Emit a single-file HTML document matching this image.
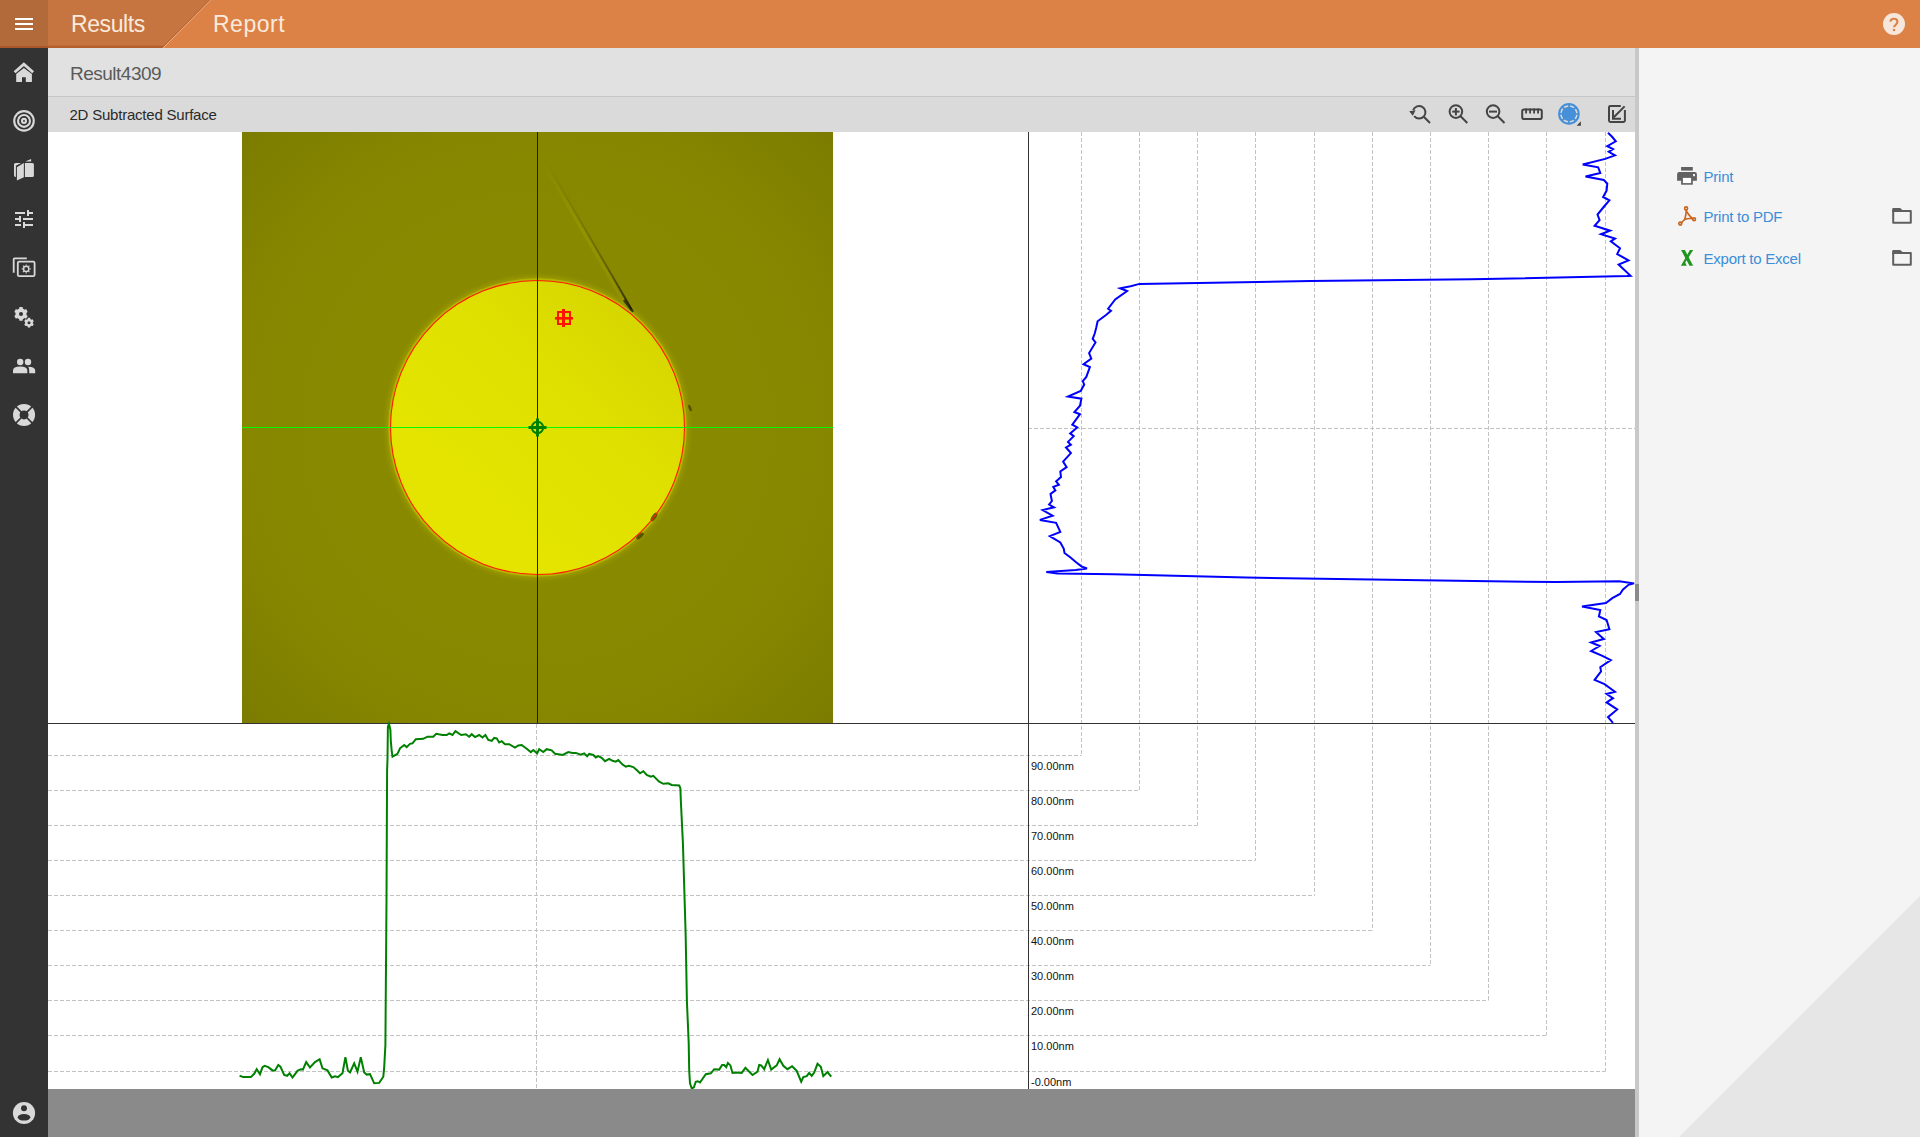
<!DOCTYPE html>
<html><head><meta charset="utf-8">
<style>
*{margin:0;padding:0;box-sizing:border-box}
html,body{width:1920px;height:1137px;overflow:hidden;background:#fff;font-family:"Liberation Sans",sans-serif}
.a{position:absolute}
.t{position:absolute;white-space:nowrap}
#topbar{left:0;top:0;width:1920px;height:48px;background:#dc8247}
#ham{left:0;top:0;width:48px;height:48px;background:#b36a3a;border-bottom:2px solid #a9582c}
#side{left:0;top:48px;width:48px;height:1089px;background:#333333}
#hdr{left:48px;top:48px;width:1587px;height:49px;background:#e1e1e1;border-bottom:1px solid #c6c6c6}
#tb{left:48px;top:97px;width:1587px;height:35px;background:#dadada}
#content{left:48px;top:132px;width:1587px;height:957px;background:#fff}
#bottom{left:48px;top:1089px;width:1587px;height:48px;background:#8a8a8a}
#split{left:1635px;top:48px;width:4px;height:1089px;background:#c8c8c8}
#rp{left:1639px;top:48px;width:281px;height:1089px;background:#f4f4f4;overflow:hidden}
.lbl{font-size:11px;line-height:11px;color:#111}
.lnk{font-size:15px;line-height:15px;color:#3b8ed8;letter-spacing:-0.25px}
</style></head>
<body>
<div id="topbar" class="a"></div>
<svg class="a" style="left:0;top:0" width="300" height="48">
  <polygon points="48,0 210,0 163,48 48,48" fill="#c67540"/>
  <line x1="163" y1="48" x2="210.5" y2="0" stroke="#f2b98d" stroke-width="1"/>
  <line x1="162" y1="48" x2="209.5" y2="0" stroke="#b5612f" stroke-width="1"/>
  <rect x="48" y="46" width="115" height="2" fill="#b3602c"/><rect x="48" y="45" width="116" height="1" fill="#c06c38"/>
</svg>
<div id="ham" class="a"></div>
<svg class="a" style="left:0;top:0" width="48" height="48">
  <rect x="15" y="18" width="18" height="2" fill="#fff"/>
  <rect x="15" y="23" width="18" height="2" fill="#fff"/>
  <rect x="15" y="28" width="18" height="2" fill="#fff"/>
</svg>
<div class="t" style="left:71px;top:12.5px;font-size:23px;line-height:23px;color:#faeadd;letter-spacing:-0.4px">Results</div>
<div class="t" style="left:213px;top:12.5px;font-size:23px;line-height:23px;color:#faeadd;letter-spacing:0.5px">Report</div>
<svg class="a" style="left:1870px;top:0" width="50" height="48">
  <circle cx="24" cy="24" r="11" fill="#f7e6db"/>
  <path d="M20.3 21.6 Q20.7 18.7 24 18.7 Q27.4 18.7 27.4 21.8 Q27.4 23.3 25.7 24.8 Q24 26.1 24 27.3" fill="none" stroke="#dc8247" stroke-width="2.1"/>
  <rect x="22.9" y="28.9" width="2.2" height="2.2" fill="#dc8247"/>
</svg>

<div id="side" class="a"></div>

<svg class="a" style="left:0;top:48px" width="48" height="400" fill="#d9d9d9">
  <!-- home: 14..34 x 62..82 (offset -48) -->
  <g transform="translate(0,-48)">
    <polyline points="14.6,72.3 23.85,64.2 33.1,72.3" fill="none" stroke="#d9d9d9" stroke-width="2.8"/><path d="M16.2 74 L23.85 68 L31.9 74 V81.9 H25.8 V77.2 H22 V81.9 H16.2 Z"/>
    <!-- target -->
    <circle cx="24" cy="120.9" r="9.75" fill="none" stroke="#d9d9d9" stroke-width="2.1"/>
    <circle cx="24" cy="120.9" r="5.95" fill="none" stroke="#d9d9d9" stroke-width="2.1"/>
    <circle cx="24" cy="120.9" r="2" fill="none" stroke="#d9d9d9" stroke-width="2.1"/>
    <!-- map/book -->
    <path d="M14 164.5 Q14 162.9 15.6 162.9 H21 L15.9 165.8 V176.9 H15.6 Q14 176.9 14 175.3 Z"/>
    <path d="M16.9 167.2 L23.85 162.9 V177.2 L16.9 180.6 Z"/>
    <path d="M24.9 162.9 H32.3 Q33.9 162.9 33.9 164.5 V175.4 Q33.9 177 32.3 177 H24.9 Z"/>
    <path d="M25.3 161.6 L31.1 159 V161.6 Z"/>
    <!-- sliders -->
    <rect x="15" y="212" width="10" height="2"/><rect x="27" y="210" width="2" height="6"/><rect x="29" y="212" width="4" height="2"/>
    <rect x="15" y="218" width="4" height="2"/><rect x="19" y="216" width="2" height="6"/><rect x="23" y="218" width="10" height="2"/>
    <rect x="15" y="224" width="6" height="2"/><rect x="23" y="222" width="2" height="6"/><rect x="25" y="224" width="8" height="2"/>
    <!-- gallery -->
    <path d="M13.7 272.7 V259.2 Q13.7 258.3 14.6 258.3 H26.8" fill="none" stroke="#d9d9d9" stroke-width="1.8"/>
    <rect x="17.8" y="261.6" width="16.8" height="14.6" rx="1.5" fill="none" stroke="#d9d9d9" stroke-width="1.8"/>
    <circle cx="26.2" cy="268.9" r="2.6" fill="none" stroke="#d9d9d9" stroke-width="1.4"/>
    <g stroke="#d9d9d9" stroke-width="1.2">
      <line x1="26.2" y1="264.4" x2="26.2" y2="265.6"/><line x1="26.2" y1="272.2" x2="26.2" y2="273.4"/>
      <line x1="21.7" y1="268.9" x2="22.9" y2="268.9"/><line x1="29.5" y1="268.9" x2="30.7" y2="268.9"/>
      <line x1="23" y1="265.7" x2="23.9" y2="266.6"/><line x1="28.5" y1="271.2" x2="29.4" y2="272.1"/>
      <line x1="29.4" y1="265.7" x2="28.5" y2="266.6"/><line x1="23.9" y1="271.2" x2="23" y2="272.1"/>
    </g>
    <!-- gears -->
    <path d="M22.79 319.21 L22.60 320.72 L19.40 320.72 L19.21 319.21 L17.30 318.10 L15.90 318.69 L14.30 315.92 L15.51 315.01 L15.51 312.79 L14.30 311.88 L15.90 309.11 L17.30 309.70 L19.21 308.59 L19.40 307.08 L22.60 307.08 L22.79 308.59 L24.70 309.70 L26.10 309.11 L27.70 311.88 L26.49 312.79 L26.49 315.01 L27.70 315.92 L26.10 318.69 L24.70 318.10 Z"/><circle cx="21" cy="313.9" r="2.0" fill="#333"/>
    <path d="M30.28 326.49 L30.14 327.57 L27.86 327.57 L27.72 326.49 L26.35 325.70 L25.36 326.12 L24.21 324.15 L25.08 323.49 L25.08 321.91 L24.21 321.25 L25.36 319.28 L26.35 319.70 L27.72 318.91 L27.86 317.83 L30.14 317.83 L30.28 318.91 L31.65 319.70 L32.64 319.28 L33.79 321.25 L32.92 321.91 L32.92 323.49 L33.79 324.15 L32.64 326.12 L31.65 325.70 Z"/><circle cx="29" cy="322.7" r="1.5" fill="#333"/>
    <!-- people -->
    <circle cx="20.2" cy="362" r="3.2"/>
    <circle cx="28" cy="362" r="3.2"/>
    <path d="M13 373.2 V370.5 Q13 366.6 20.2 366.6 Q27.3 366.6 27.3 370.5 V373.2 Z"/>
    <path d="M28.3 366.8 Q35.2 367 35.2 370.5 V373.2 H29.2 V370.5 Q29.2 368.2 28.3 366.8 Z"/>
    <!-- lifebuoy -->
    <circle cx="24.04" cy="414.9" r="11"/>
    <circle cx="24.04" cy="414.9" r="4.5" fill="#333"/>
    <g stroke="#333" stroke-width="1.7"><line x1="26.16" y1="417.02" x2="32.53" y2="423.39"/><line x1="21.92" y1="417.02" x2="15.55" y2="423.39"/><line x1="21.92" y1="412.78" x2="15.55" y2="406.41"/><line x1="26.16" y1="412.78" x2="32.53" y2="406.41"/></g>
  </g>
</svg>
<svg class="a" style="left:0;top:1090px" width="48" height="47">
  <circle cx="24" cy="23" r="11.1" fill="#d9d9d9"/>
  <circle cx="24" cy="18.3" r="3" fill="#333"/>
  <ellipse cx="24" cy="27.3" rx="6.3" ry="3.3" fill="#333"/>
</svg>
<div id="hdr" class="a"></div>
<div id="tb" class="a"></div>
<div id="content" class="a"></div>

<svg class="a" style="left:0;top:0" width="1640" height="1137">
 <g stroke="#c3c3c3" stroke-width="1" stroke-dasharray="4 2" fill="none">
<line x1="1081.5" y1="132" x2="1081.5" y2="755.5"/>
<line x1="48" y1="755.5" x2="1081.5" y2="755.5"/>
<line x1="1139.5" y1="132" x2="1139.5" y2="790.5"/>
<line x1="48" y1="790.5" x2="1139.5" y2="790.5"/>
<line x1="1197.5" y1="132" x2="1197.5" y2="825.5"/>
<line x1="48" y1="825.5" x2="1197.5" y2="825.5"/>
<line x1="1255.5" y1="132" x2="1255.5" y2="860.5"/>
<line x1="48" y1="860.5" x2="1255.5" y2="860.5"/>
<line x1="1314.5" y1="132" x2="1314.5" y2="895.5"/>
<line x1="48" y1="895.5" x2="1314.5" y2="895.5"/>
<line x1="1372.5" y1="132" x2="1372.5" y2="930.5"/>
<line x1="48" y1="930.5" x2="1372.5" y2="930.5"/>
<line x1="1430.5" y1="132" x2="1430.5" y2="965.5"/>
<line x1="48" y1="965.5" x2="1430.5" y2="965.5"/>
<line x1="1488.5" y1="132" x2="1488.5" y2="1000.5"/>
<line x1="48" y1="1000.5" x2="1488.5" y2="1000.5"/>
<line x1="1546.5" y1="132" x2="1546.5" y2="1035.5"/>
<line x1="48" y1="1035.5" x2="1546.5" y2="1035.5"/>
<line x1="1605.5" y1="132" x2="1605.5" y2="1071.5"/>
<line x1="48" y1="1071.5" x2="1605.5" y2="1071.5"/>
  <line x1="1028" y1="428.5" x2="1635" y2="428.5"/>
  <line x1="536.5" y1="724" x2="536.5" y2="1089"/>
 </g>
 <line x1="48" y1="723.5" x2="1635" y2="723.5" stroke="#333" stroke-width="1"/>
 <line x1="1028.5" y1="132" x2="1028.5" y2="1089" stroke="#333" stroke-width="1"/>
</svg>

<svg class="a" style="left:242px;top:132px" width="591" height="591" viewBox="0 0 591 591">
 <defs>
  <radialGradient id="bg" cx="295.5" cy="295.5" r="420" gradientUnits="userSpaceOnUse">
   <stop offset="0" stop-color="#8a8a00"/>
   <stop offset="0.5" stop-color="#898900"/>
   <stop offset="0.72" stop-color="#868600"/>
   <stop offset="1" stop-color="#7b7b00"/>
  </radialGradient>
  <linearGradient id="yel" x1="0.25" y1="0.75" x2="0.85" y2="0.1">
   <stop offset="0" stop-color="#e4e400"/>
   <stop offset="0.5" stop-color="#e1e100"/>
   <stop offset="1" stop-color="#d6d600"/>
  </linearGradient>
  <radialGradient id="halo" cx="295.5" cy="295.5" r="156" gradientUnits="userSpaceOnUse">
   <stop offset="0.94" stop-color="#a6a600" stop-opacity="1"/>
   <stop offset="0.965" stop-color="#9a9a00" stop-opacity="0.7"/>
   <stop offset="1" stop-color="#8a8a00" stop-opacity="0"/>
  </radialGradient>
  <linearGradient id="scr" gradientUnits="userSpaceOnUse" x1="302" y1="26" x2="390" y2="178">
   <stop offset="0" stop-color="#4a4a00" stop-opacity="0"/>
   <stop offset="0.4" stop-color="#4a4a00" stop-opacity="0.22"/>
   <stop offset="0.75" stop-color="#2a2a00" stop-opacity="0.45"/>
   <stop offset="1" stop-color="#1a1a10" stop-opacity="0.9"/>
  </linearGradient>
  <linearGradient id="scl" gradientUnits="userSpaceOnUse" x1="302" y1="26" x2="390" y2="178">
   <stop offset="0" stop-color="#9c9c00" stop-opacity="0"/>
   <stop offset="0.45" stop-color="#9c9c00" stop-opacity="0.55"/>
   <stop offset="1" stop-color="#9c9c00" stop-opacity="0.35"/>
  </linearGradient>
 </defs>
 <rect width="591" height="591" fill="url(#bg)"/>
 <circle cx="295.5" cy="295.5" r="156" fill="url(#halo)"/>
 <path d="M299 27 L387 179" stroke="url(#scl)" stroke-width="3" fill="none"/>
 <path d="M302 26 L390 178" stroke="url(#scr)" stroke-width="1.9" fill="none"/>
 <path d="M382 168 L391 180" stroke="#202010" stroke-width="2.6" opacity="0.75"/>
 <circle cx="295.5" cy="295.5" r="149.2" fill="#b8b800" opacity="0.9"/>
 <circle cx="295.5" cy="295.5" r="147" fill="url(#yel)"/>
 <g fill="#3c3c00" opacity="0.75">
  <ellipse cx="412" cy="385" rx="2.2" ry="5" transform="rotate(35 412 385)"/>
  <ellipse cx="398" cy="404" rx="2" ry="4.5" transform="rotate(50 398 404)"/>
  <ellipse cx="448" cy="276" rx="1.3" ry="3.5" transform="rotate(-20 448 276)"/>
 </g>
 <circle cx="295.5" cy="295.5" r="147" fill="none" stroke="#ff1a00" stroke-width="1.1"/>
 <line x1="0" y1="295.5" x2="591" y2="295.5" stroke="#00ff00" stroke-width="1"/>
 <line x1="295.5" y1="0" x2="295.5" y2="591" stroke="#0000ff" stroke-width="1"/>
 <!-- green marker -->
 <g stroke="#008000" fill="none">
  <circle cx="295.5" cy="295.5" r="5.7" stroke-width="2"/>
  <line x1="286.5" y1="295.5" x2="304.5" y2="295.5" stroke-width="3"/>
  <line x1="295.5" y1="286.5" x2="295.5" y2="304.5" stroke-width="3"/>
 </g>
 <!-- red marker center (321.5,186) local -->
 <g fill="#ff1400">
  <path d="M315 179 H329 V193 H315 Z M317 181 V191 H327 V181 Z" fill-rule="evenodd"/>
  <rect x="313" y="185" width="18" height="2.6"/>
  <rect x="320" y="177" width="3" height="18"/>
 </g>
</svg>
<div class="t lbl" style="left:1031px;top:760.5px">90.00nm</div>
<div class="t lbl" style="left:1031px;top:795.5px">80.00nm</div>
<div class="t lbl" style="left:1031px;top:830.5px">70.00nm</div>
<div class="t lbl" style="left:1031px;top:865.5px">60.00nm</div>
<div class="t lbl" style="left:1031px;top:900.5px">50.00nm</div>
<div class="t lbl" style="left:1031px;top:935.5px">40.00nm</div>
<div class="t lbl" style="left:1031px;top:970.5px">30.00nm</div>
<div class="t lbl" style="left:1031px;top:1005.5px">20.00nm</div>
<div class="t lbl" style="left:1031px;top:1040.5px">10.00nm</div>
<div class="t lbl" style="left:1031px;top:1076.5px">-0.00nm</div>
<!--CURVES--><svg class="a" style="left:0;top:0" width="1640" height="1137">
 <defs><clipPath id="cb"><rect x="48" y="132" width="1587" height="957"/></clipPath></defs>
 <g clip-path="url(#cb)" fill="none" stroke-linejoin="miter" stroke-width="2">
  <polyline points="239.6,1075.8 243.3,1077.1 250.8,1077.1 254.2,1073.8 256.7,1069.2 260.0,1074.2 262.5,1067.1 264.6,1065.8 268.3,1067.1 272.5,1070.4 275.0,1070.4 278.3,1065.0 280.4,1066.7 284.2,1075.0 287.1,1075.8 289.6,1073.3 292.5,1077.5 297.5,1070.8 300.8,1069.2 302.9,1069.6 306.2,1062.1 310.0,1067.5 315.0,1062.1 319.6,1059.2 322.5,1068.3 327.5,1070.4 331.7,1077.5 335.0,1076.2 337.9,1077.1 342.5,1073.3 345.4,1057.1 347.9,1070.8 350.0,1072.5 354.2,1063.3 357.5,1071.7 360.8,1057.1 364.2,1072.5 366.7,1074.6 370.0,1074.2 374.2,1083.3 379.2,1082.9 383.3,1076.7 384.2,1067.1 385.4,1045.0 386.5,900.0 387.1,770.0 387.5,759.2 387.9,726.7 389.0,723.8 390.4,730.0 390.8,740.8 391.7,750.8 392.5,756.7 397.5,753.8 400.0,748.3 404.2,745.0 406.7,747.1 410.0,743.8 412.5,743.3 415.8,739.2 423.3,738.8 427.5,736.7 433.3,736.7 436.2,733.8 442.5,735.0 446.7,735.0 449.2,733.3 452.5,735.0 455.4,731.2 461.2,735.0 465.8,734.2 469.2,736.7 471.7,734.2 475.0,737.1 479.2,735.0 482.5,737.5 485.4,735.0 488.3,740.0 491.7,740.8 494.2,737.9 496.7,738.3 499.2,742.5 501.7,741.2 505.0,744.2 509.2,744.2 515.0,747.5 518.3,745.4 521.7,745.0 526.7,748.8 530.8,752.1 533.3,750.0 537.1,753.3 539.2,749.2 543.3,752.1 546.7,749.2 551.7,750.4 555.0,753.8 558.3,754.2 562.9,755.0 568.3,752.1 572.5,752.9 575.8,752.9 580.8,754.6 584.2,753.3 587.1,756.2 589.2,753.8 593.3,755.0 595.8,757.5 598.3,756.2 601.7,757.9 605.0,761.2 609.2,758.8 612.5,760.8 615.8,761.7 618.3,760.0 622.5,764.6 625.8,766.7 628.8,765.8 633.3,767.1 636.7,770.0 640.0,773.3 643.3,771.2 646.7,775.0 650.8,776.7 653.3,775.8 659.2,781.7 663.3,783.8 668.3,783.3 671.7,785.0 679.2,785.4 680.4,788.3 680.8,800.0 682.9,842.8 685.6,932.5 686.9,1001.0 688.7,1043.0 689.2,1070.8 690.0,1083.3 691.7,1088.3 693.8,1087.5 695.8,1081.7 697.5,1081.2 700.0,1082.5 705.8,1074.2 710.8,1073.3 714.2,1069.2 719.2,1069.6 722.1,1065.0 724.2,1065.0 726.2,1067.1 727.9,1062.9 730.4,1065.4 732.5,1072.9 736.7,1072.5 741.7,1072.9 745.4,1067.9 752.5,1075.0 757.5,1071.7 759.2,1065.0 761.2,1065.4 764.2,1069.2 767.9,1060.0 771.2,1069.6 776.7,1065.4 779.6,1059.2 783.3,1065.8 787.5,1069.2 792.1,1066.2 796.7,1070.8 801.2,1081.7 803.3,1077.1 806.7,1076.2 809.2,1072.9 811.7,1075.8 814.2,1072.5 817.5,1063.8 820.8,1066.7 823.3,1076.2 827.5,1072.1 831.2,1076.7" stroke="#008000"/>
  <polyline points="1608.0,132.8 1612.3,137.0 1615.8,141.3 1607.3,146.2 1613.0,149.0 1608.7,151.8 1615.0,155.4 1605.2,158.9 1582.7,164.5 1598.2,167.3 1600.3,173.0 1585.5,176.5 1603.8,180.0 1607.3,183.5 1606.6,190.6 1603.1,197.0 1609.4,200.4 1604.5,206.0 1597.5,214.5 1599.6,220.1 1594.6,225.8 1610.1,230.7 1601.0,234.2 1615.0,238.5 1610.8,241.3 1620.0,248.3 1617.2,254.0 1628.5,260.3 1618.6,264.5 1630.6,275.8 1627.0,276.0 1472.0,279.3 1310.6,281.0 1139.5,283.9 1130.6,286.2 1120.1,288.3 1127.1,291.1 1115.2,299.5 1108.1,308.7 1111.0,310.8 1106.0,315.0 1097.6,321.3 1096.2,327.7 1094.8,333.3 1092.7,338.9 1095.5,342.4 1089.1,353.0 1091.3,358.6 1083.5,364.2 1089.9,367.0 1086.3,376.9 1082.8,381.1 1084.2,384.6 1080.7,391.0 1068.0,396.6 1081.4,398.7 1080.0,405.7 1074.4,412.0 1080.0,414.2 1072.3,424.7 1077.2,427.5 1070.2,433.4 1073.7,436.2 1068.0,441.9 1070.9,444.7 1066.0,447.5 1070.9,453.1 1063.1,461.6 1066.6,467.2 1060.3,471.4 1061.0,477.0 1056.1,481.3 1058.9,484.8 1053.3,486.9 1055.4,490.4 1050.5,493.9 1051.9,501.0 1049.1,504.5 1054.0,507.3 1042.7,510.1 1052.6,515.7 1039.9,519.9 1056.1,522.8 1060.3,531.9 1049.8,536.1 1060.3,542.4 1063.8,548.8 1064.5,553.0 1070.2,557.2 1075.8,562.1 1081.4,566.4 1087.0,568.5 1075.8,569.9 1046.3,572.0 1057.5,573.4 1113.6,574.3 1246.0,577.6 1439.8,580.5 1556.0,582.1 1619.3,581.3 1634.1,583.4 1628.5,584.8 1622.8,589.7 1620.0,594.0 1612.3,598.2 1605.9,603.1 1582.0,606.6 1600.3,610.1 1598.9,616.5 1606.6,620.0 1609.4,629.2 1596.0,632.0 1603.8,639.0 1591.1,642.5 1599.6,646.0 1591.1,651.0 1602.4,655.9 1610.8,660.1 1600.3,667.2 1601.0,671.4 1594.6,679.9 1604.5,684.1 1615.0,691.8 1606.6,694.0 1613.0,698.2 1606.6,702.4 1617.2,709.4 1608.0,717.2 1613.0,722.8" stroke="#0000ff"/>
 </g>
</svg>
<!--/CURVES-->
<div id="bottom" class="a"></div>
<div id="split" class="a"></div>
<div id="rp" class="a"></div>

<div class="t" style="left:70px;top:64.1px;font-size:19px;line-height:19px;color:#5a5a5a;letter-spacing:-0.5px">Result4309</div>
<div class="t" style="left:69.5px;top:107.2px;font-size:15px;line-height:15px;color:#2a2a2a;letter-spacing:-0.22px">2D Subtracted Surface</div>


<svg class="a" style="left:1400px;top:95.6px" width="235" height="36">
 <g fill="none" stroke="#444" stroke-width="2">
  <!-- refresh zoom: center (18.75,15.6) r 6.3 -->
  <path d="M13.2 14.2 A6.3 6.3 0 1 1 14.2 20.2"/>
  <line x1="23.3" y1="20.3" x2="30" y2="27"/>
  <!-- zoom in center (55.9,15.6) -->
  <circle cx="55.9" cy="15.6" r="6.3"/>
  <line x1="60.6" y1="20.3" x2="67.3" y2="27"/>
  <line x1="52.2" y1="15.6" x2="59.6" y2="15.6"/>
  <line x1="55.9" y1="12" x2="55.9" y2="19.4"/>
  <!-- zoom out center (93.1,15.6) -->
  <circle cx="93.1" cy="15.6" r="6.3"/>
  <line x1="97.8" y1="20.3" x2="104.5" y2="27"/>
  <line x1="89" y1="15.6" x2="97" y2="15.6"/>
  <!-- ruler -->
  <rect x="122.2" y="13.4" width="19.6" height="9.7" rx="1.8"/>
 </g>
 <path d="M9.2 15.3 L15.6 14.2 L12.8 19.8 Z" fill="#444"/>
 <g fill="#444">
  <rect x="125.2" y="12.5" width="1.8" height="5"/>
  <rect x="129.2" y="12.5" width="1.8" height="5"/>
  <rect x="133.2" y="12.5" width="1.8" height="5"/>
  <rect x="137.2" y="12.5" width="1.8" height="5"/>
 </g>
 <!-- blue circle center (168.9,17.9) r 10.8 -->
 <circle cx="168.9" cy="17.9" r="10.8" fill="#4690da"/>
 <circle cx="168.9" cy="17.9" r="8.0" fill="none" stroke="#efe2d6" stroke-width="1.5" stroke-dasharray="4.383 1.9" stroke-dashoffset="5.333" opacity="0.9"/>
 <path d="M176.6 29.8 L180.9 25.2 L180.9 29.8 Z" fill="#444"/>
 <!-- edit/export icon -->
 <g fill="none" stroke="#444" stroke-width="2">
  <path d="M220.8 9.9 H210.4 Q209 9.9 209 11.3 V24.5 Q209 25.9 210.4 25.9 H223.5 Q224.9 25.9 224.9 24.5 V14.1"/>
  <line x1="224.6" y1="10.4" x2="213.8" y2="21.2"/>
  <path d="M213 14.1 V22.8 H221"/>
 </g>
</svg>
<svg class="a" style="left:1639px;top:48px" width="281" height="1089">
 <path d="M281 848 L281 1089 L40 1089 Z" fill="#e6e6e6"/>
</svg>
<div class="a" style="left:1635px;top:584px;width:4px;height:17px;background:#8a8a8a"></div>
<svg class="a" style="left:1670px;top:160px" width="250" height="115">
 <!-- printer -->
 <g fill="#616161">
  <rect x="11.1" y="7" width="11.7" height="3.6"/>
  <path d="M7.1 20.7 V14.2 Q7.1 12 9.3 12 H24.7 Q26.9 12 26.9 14.2 V20.7 Z"/>
  <rect x="11.1" y="17" width="11.7" height="7.7"/>
 </g>
 <rect x="12.9" y="17.9" width="8.2" height="5.2" fill="#ffffff"/>
 <rect x="23" y="14" width="2" height="2.2" fill="#eeeeee"/>
 <!-- pdf -->
 <g fill="none" stroke="#c8641f" stroke-width="1.6" stroke-linejoin="round" stroke-linecap="round">
  <path d="M16.3 50 Q16.2 54.5 14.8 59.2 L11.2 63"/>
  <path d="M16.6 51.5 Q19.2 56 22.8 58.8"/>
  <path d="M14.6 59.4 Q18.5 57.9 22.8 58.8"/>
  <circle cx="16.1" cy="48.4" r="1.5"/>
  <circle cx="24.1" cy="59.2" r="1.4"/>
  <circle cx="10.3" cy="63.6" r="1.5"/>
 </g>
 <!-- excel X -->
 <g fill="#1f951f"><path d="M11.1 90.1 H14.9 L23.1 105.7 H19.5 Z"/><path d="M19.9 90.1 H23.2 L15.2 102.6 L16.7 105.7 H10.9 Z"/></g>
 <!-- folders -->
 <g fill="none" stroke="#5f5f5f" stroke-width="2" stroke-linejoin="round">
  <path d="M223.2 51 H240.8 V62.8 H223.2 Z"/>
  <path d="M223.2 92.9 H240.8 V104.7 H223.2 Z"/>
 </g>
 <g fill="#5f5f5f">
  <path d="M222.2 52 V49 Q222.2 48 223.2 48 H230.2 L232.6 50.2 H224 V52 Z"/>
  <path d="M222.2 93.9 V90.9 Q222.2 89.9 223.2 89.9 H230.2 L232.6 92.1 H224 V93.9 Z"/>
 </g>
</svg>
<div class="t lnk" style="left:1703.6px;top:169px">Print</div>
<div class="t lnk" style="left:1703.6px;top:209px">Print to PDF</div>
<div class="t lnk" style="left:1703.6px;top:251.2px">Export to Excel</div>

</body></html>
